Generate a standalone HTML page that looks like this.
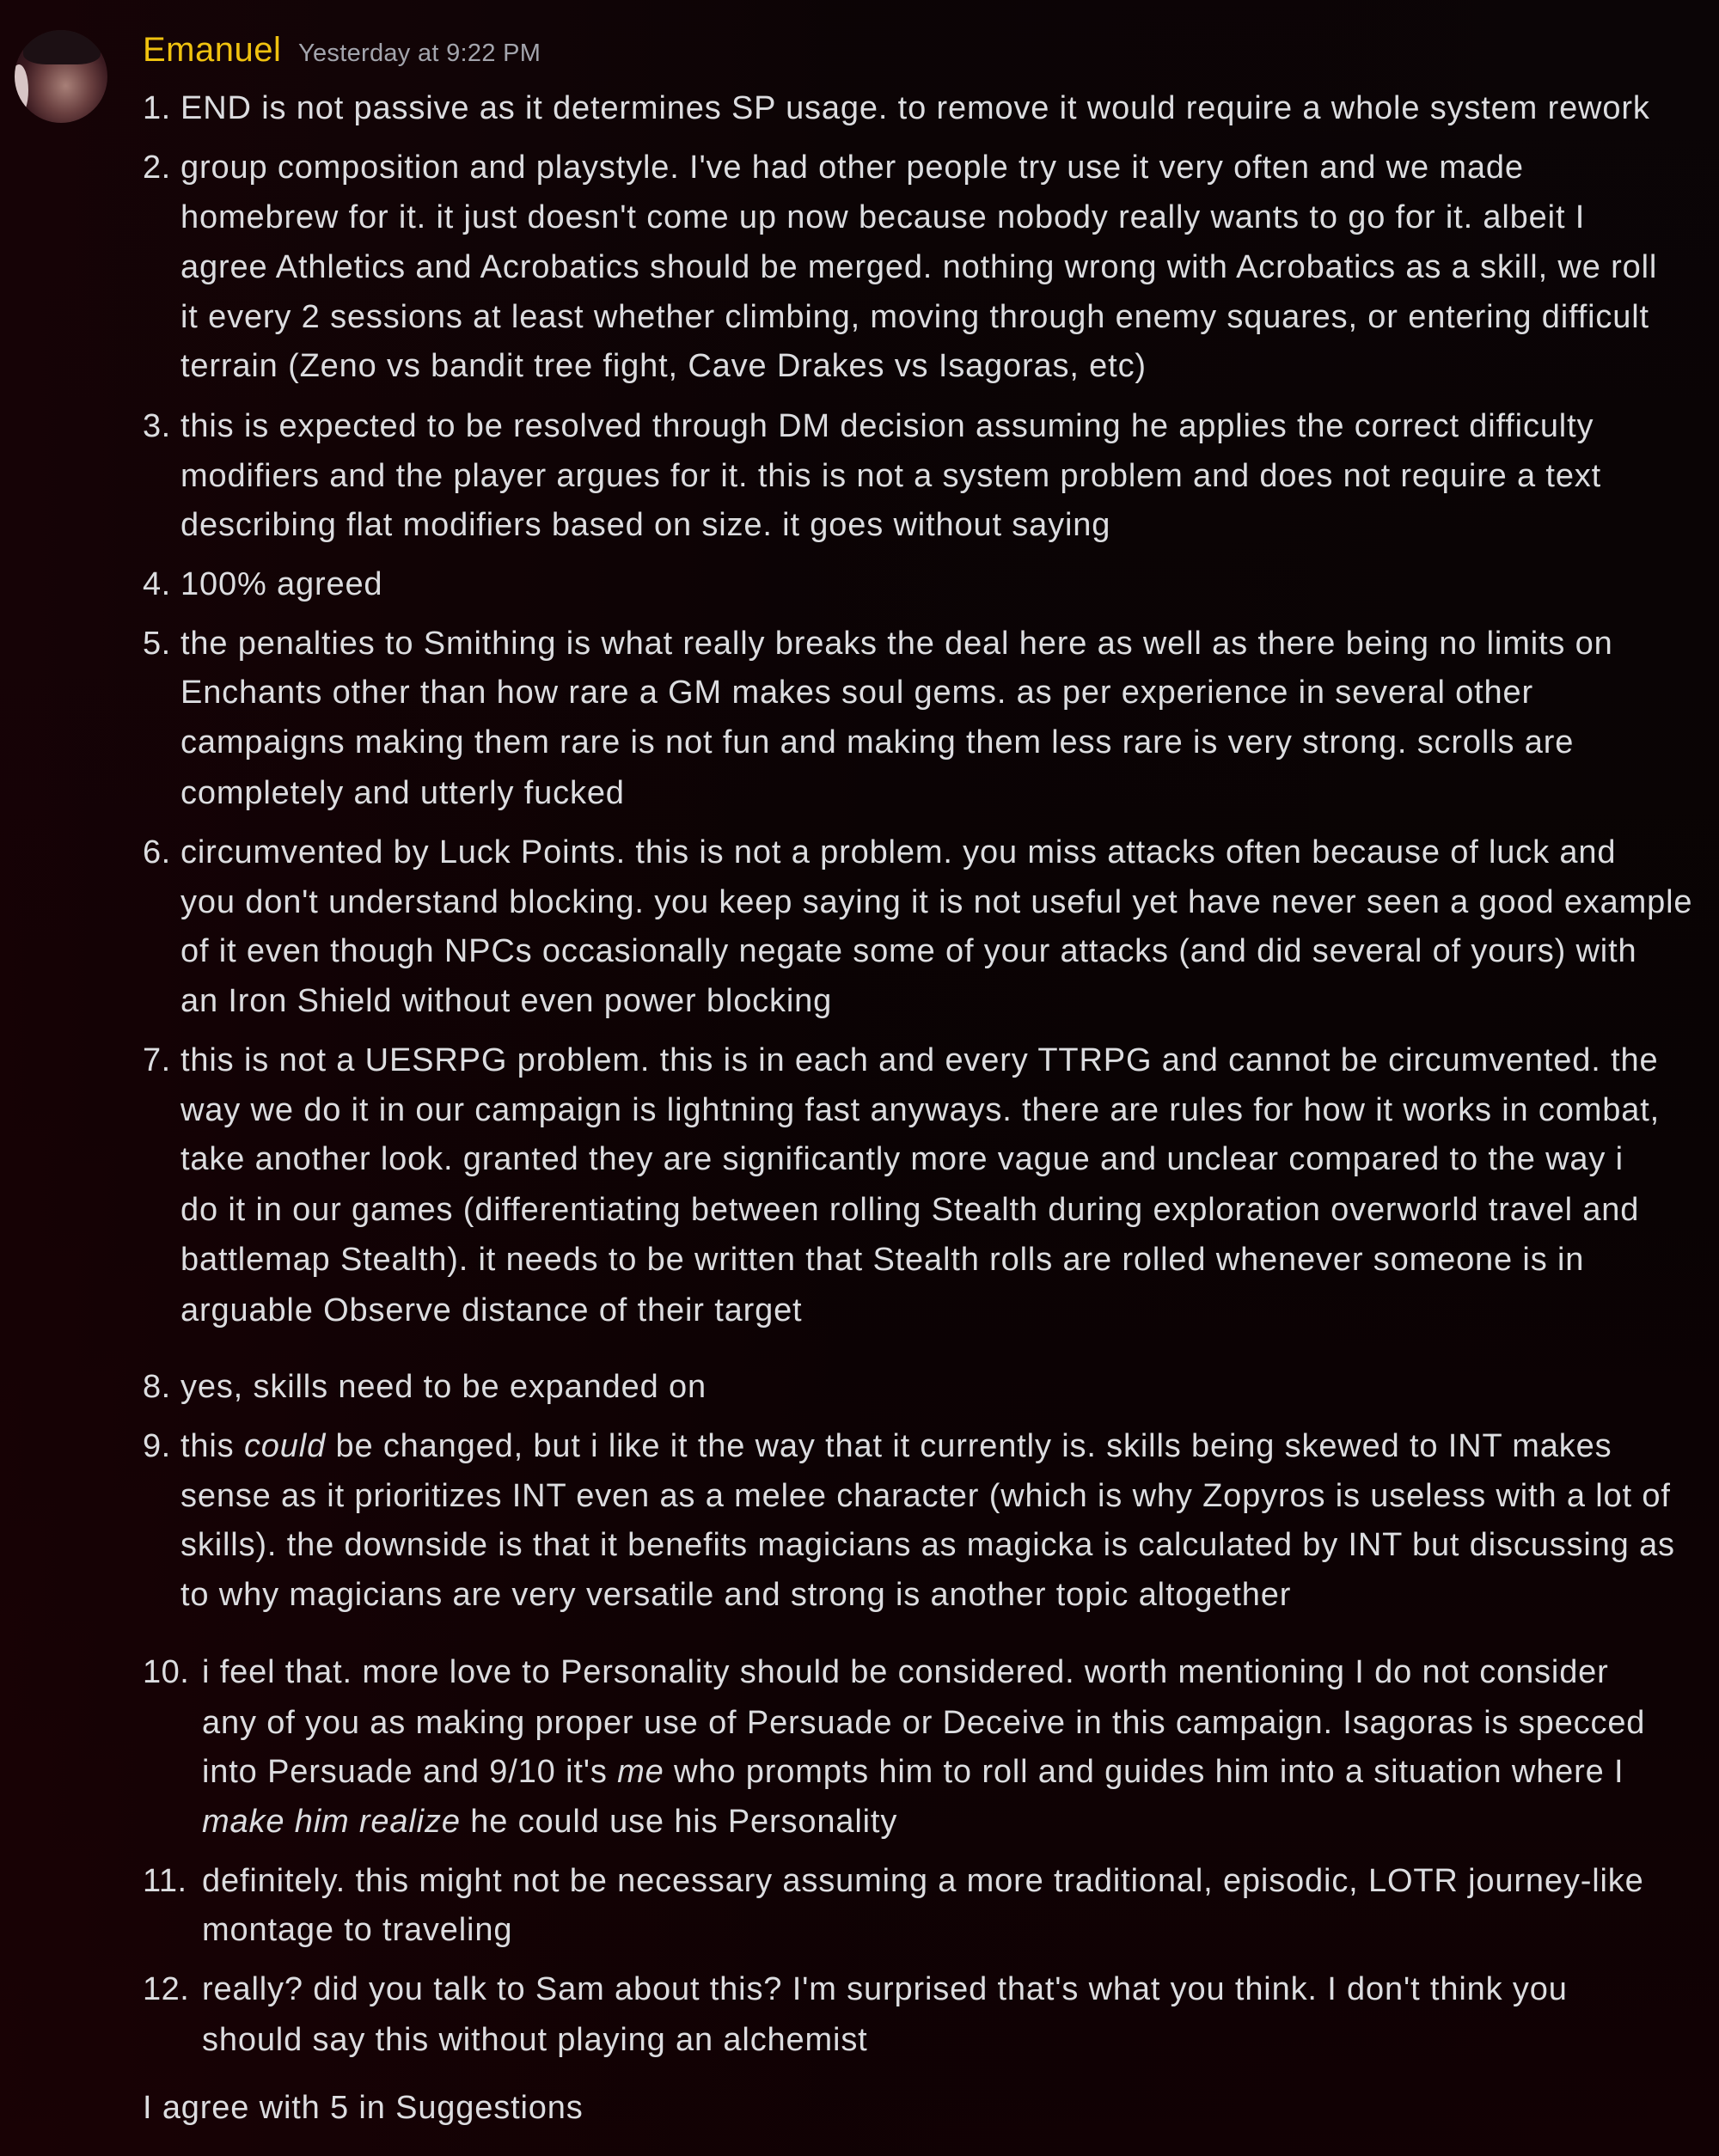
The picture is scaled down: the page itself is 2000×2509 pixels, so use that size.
<!DOCTYPE html>
<html><head><meta charset="utf-8"><style>
html,body{margin:0;padding:0}
body{width:2000px;height:2509px;overflow:hidden;position:relative;
background:linear-gradient(90deg,rgba(30,2,6,0.6) 0%,rgba(14,2,4,0.35) 50%,rgba(0,0,0,0) 100%),linear-gradient(180deg,#0b0506 0%,#090304 50%,#120104 100%);
font-family:"Liberation Sans",sans-serif;color:#dcdde0}
.l{position:absolute;white-space:nowrap;font-size:38px;line-height:58px;letter-spacing:0.85px}
.n{position:absolute;white-space:nowrap;font-size:38px;line-height:58px;left:166px;letter-spacing:0.5px}
.a{left:210px}.b{left:235px}
.av{position:absolute;left:17px;top:35px;width:108px;height:108px;border-radius:50%;
background:radial-gradient(ellipse at 55% 60%,#a88078 0%,#6a4040 35%,#3a1a20 60%,#1a0a10 100%);overflow:hidden}
.av:before{content:"";position:absolute;left:10px;top:0;width:90px;height:40px;background:#1c1014;border-radius:50% 50% 30% 30%}
.av:after{content:"";position:absolute;left:-6px;top:40px;width:22px;height:60px;background:#d8c6c6;border-radius:50%}
</style></head><body>
<div class="av"></div>
<div style="position:absolute;left:166px;top:30px;font-size:40px;line-height:56px;color:#f0c20f;letter-spacing:0.5px">Emanuel</div>
<div style="position:absolute;left:347px;top:38px;font-size:29px;line-height:48px;color:#a3a5ad;letter-spacing:0.3px">Yesterday at 9:22 PM</div>

<div class="n" style="top:97px">1.</div><div class="l a" style="top:97px">END is not passive as it determines SP usage. to remove it would require a whole system rework</div>

<div class="n" style="top:166px">2.</div>
<div class="l a" style="top:166px">group composition and playstyle. I've had other people try use it very often and we made</div>
<div class="l a" style="top:224px">homebrew for it. it just doesn't come up now because nobody really wants to go for it. albeit I</div>
<div class="l a" style="top:282px">agree Athletics and Acrobatics should be merged. nothing wrong with Acrobatics as a skill, we roll</div>
<div class="l a" style="top:340px">it every 2 sessions at least whether climbing, moving through enemy squares, or entering difficult</div>
<div class="l a" style="top:397px">terrain (Zeno vs bandit tree fight, Cave Drakes vs Isagoras, etc)</div>

<div class="n" style="top:467px">3.</div>
<div class="l a" style="top:467px">this is expected to be resolved through DM decision assuming he applies the correct difficulty</div>
<div class="l a" style="top:525px">modifiers and the player argues for it. this is not a system problem and does not require a text</div>
<div class="l a" style="top:582px">describing flat modifiers based on size. it goes without saying</div>

<div class="n" style="top:651px">4.</div><div class="l a" style="top:651px">100% agreed</div>

<div class="n" style="top:720px">5.</div>
<div class="l a" style="top:720px">the penalties to Smithing is what really breaks the deal here as well as there being no limits on</div>
<div class="l a" style="top:777px">Enchants other than how rare a GM makes soul gems. as per experience in several other</div>
<div class="l a" style="top:835px">campaigns making them rare is not fun and making them less rare is very strong. scrolls are</div>
<div class="l a" style="top:894px">completely and utterly fucked</div>

<div class="n" style="top:963px">6.</div>
<div class="l a" style="top:963px">circumvented by Luck Points. this is not a problem. you miss attacks often because of luck and</div>
<div class="l a" style="top:1021px">you don't understand blocking. you keep saying it is not useful yet have never seen a good example</div>
<div class="l a" style="top:1078px">of it even though NPCs occasionally negate some of your attacks (and did several of yours) with</div>
<div class="l a" style="top:1136px">an Iron Shield without even power blocking</div>

<div class="n" style="top:1205px">7.</div>
<div class="l a" style="top:1205px">this is not a UESRPG problem. this is in each and every TTRPG and cannot be circumvented. the</div>
<div class="l a" style="top:1263px">way we do it in our campaign is lightning fast anyways. there are rules for how it works in combat,</div>
<div class="l a" style="top:1320px">take another look. granted they are significantly more vague and unclear compared to the way i</div>
<div class="l a" style="top:1379px">do it in our games (differentiating between rolling Stealth during exploration overworld travel and</div>
<div class="l a" style="top:1437px">battlemap Stealth). it needs to be written that Stealth rolls are rolled whenever someone is in</div>
<div class="l a" style="top:1496px">arguable Observe distance of their target</div>

<div class="n" style="top:1585px">8.</div><div class="l a" style="top:1585px">yes, skills need to be expanded on</div>

<div class="n" style="top:1654px">9.</div>
<div class="l a" style="top:1654px">this <i>could</i> be changed, but i like it the way that it currently is. skills being skewed to INT makes</div>
<div class="l a" style="top:1712px">sense as it prioritizes INT even as a melee character (which is why Zopyros is useless with a lot of</div>
<div class="l a" style="top:1769px">skills). the downside is that it benefits magicians as magicka is calculated by INT but discussing as</div>
<div class="l a" style="top:1827px">to why magicians are very versatile and strong is another topic altogether</div>

<div class="n" style="top:1917px">10.</div>
<div class="l b" style="top:1917px">i feel that. more love to Personality should be considered. worth mentioning I do not consider</div>
<div class="l b" style="top:1976px">any of you as making proper use of Persuade or Deceive in this campaign. Isagoras is specced</div>
<div class="l b" style="top:2033px">into Persuade and 9/10 it's <i>me</i> who prompts him to roll and guides him into a situation where I</div>
<div class="l b" style="top:2091px"><i>make him realize</i> he could use his Personality</div>

<div class="n" style="top:2160px">11.</div>
<div class="l b" style="top:2160px">definitely. this might not be necessary assuming a more traditional, episodic, LOTR journey-like</div>
<div class="l b" style="top:2217px">montage to traveling</div>

<div class="n" style="top:2286px">12.</div>
<div class="l b" style="top:2286px">really? did you talk to Sam about this? I'm surprised that's what you think. I don't think you</div>
<div class="l b" style="top:2345px">should say this without playing an alchemist</div>

<div class="l" style="left:166px;top:2424px">I agree with 5 in Suggestions</div>
</body></html>
